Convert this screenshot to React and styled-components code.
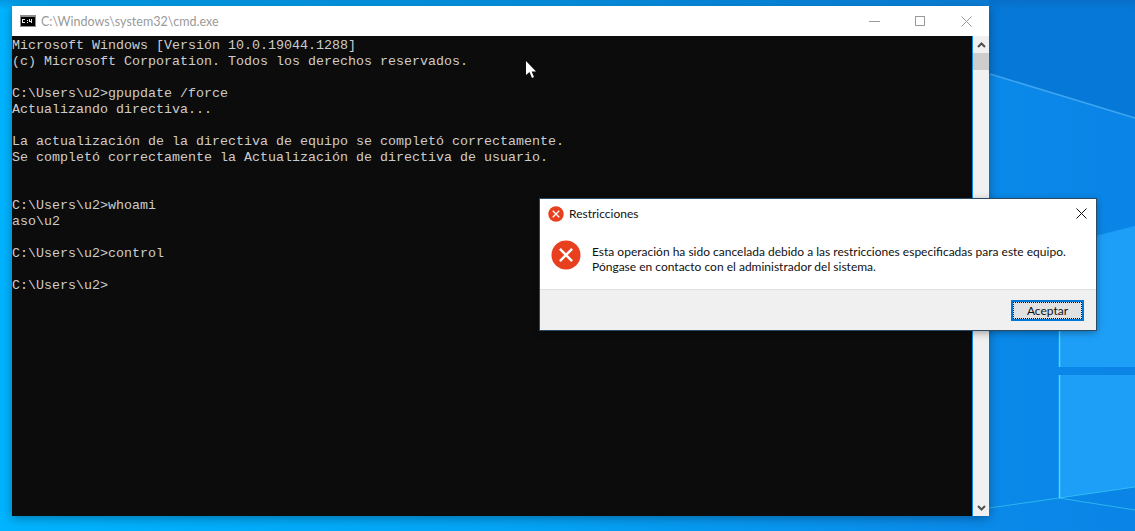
import React from "react";
import styled, { createGlobalStyle } from "styled-components";

const GlobalStyle = createGlobalStyle`
  html, body {
    margin: 0;
    padding: 0;
    height: 100%;
    overflow: hidden;
  }
  #root {
    height: 100%;
  }
`;

const uiFont = `"Lato", "Open Sans", "Liberation Sans", sans-serif`;

const Desktop = styled.div`
  position: relative;
  width: 1135px;
  height: 531px;
  overflow: hidden;
  background: linear-gradient(90deg, #00b4ff 0%, #04a4f6 45%, #0a8aea 86%, #0a84e6 100%);
`;

const Wallpaper = styled.svg`
  position: absolute;
  inset: 0;
`;

const ConsoleWindow = styled.section`
  position: absolute;
  left: 12px;
  top: 6px;
  width: 977px;
  height: 510px;
  display: flex;
  flex-direction: column;
  box-shadow: 0 2px 10px rgba(0, 0, 0, 0.35);
`;

const TitleBar = styled.header`
  height: 30px;
  flex: none;
  display: flex;
  align-items: center;
  background: #fff;
  padding-left: 8px;
`;

const TitleText = styled.span`
  margin-left: 5px;
  font: 12.5px ${uiFont};
  color: #9a9a9a;
`;

const WindowButtons = styled.div`
  margin-left: auto;
  display: flex;
  height: 100%;
`;

const WindowButton = styled.div`
  width: 46px;
  display: flex;
  align-items: center;
  justify-content: center;
`;

const ConsoleBody = styled.div`
  flex: 1;
  display: flex;
  min-height: 0;
`;

const Terminal = styled.pre`
  flex: 1;
  margin: 0;
  padding: 2px 0 0;
  background: #0c0c0c;
  color: #cccccc;
  font: 13.33px/16px "Liberation Mono", "DejaVu Sans Mono", monospace;
  overflow: hidden;
`;

const ScrollBar = styled.div`
  width: 16px;
  margin-left: 1px;
  flex: none;
  background: #f0f0f0;
  display: flex;
  flex-direction: column;
`;

const ScrollArrow = styled.div`
  height: 17px;
  flex: none;
  display: flex;
  align-items: center;
  justify-content: center;
`;

const ScrollThumb = styled.div`
  height: 17px;
  flex: none;
  background: #cdcdcd;
`;

const ScrollTrack = styled.div`
  flex: 1;
`;

const Dialog = styled.section`
  position: absolute;
  left: 540px;
  top: 199px;
  width: 556px;
  height: 131px;
  display: flex;
  flex-direction: column;
  background: #fff;
  box-shadow: 0 0 0 1px #2b4a66, 0 2px 8px rgba(0, 0, 0, 0.4);
  font: 12px ${uiFont};
  color: #111;
`;

const DialogTitle = styled.header`
  height: 29px;
  flex: none;
  display: flex;
  align-items: center;
  padding: 0 9px 0 8px;
  gap: 5px;
`;

const DialogClose = styled.div`
  margin-left: auto;
  display: flex;
`;

const DialogBody = styled.div`
  flex: 1;
  display: flex;
  align-items: flex-start;
  padding: 12px 0 0 11px;
  gap: 11px;
`;

const Message = styled.p`
  margin: 4px 0 0;
  line-height: 15px;
  white-space: nowrap;
`;

const DialogFooter = styled.footer`
  height: 41px;
  flex: none;
  box-sizing: border-box;
  display: flex;
  align-items: center;
  justify-content: flex-end;
  padding: 0 12px 0 0;
  background: #f0f0f0;
  border-top: 1px solid #dfdfdf;
`;

const AcceptButton = styled.button`
  width: 73px;
  height: 21px;
  padding: 0;
  box-sizing: border-box;
  border: 2px solid #0078d7;
  background: #e1e1e1;
  outline: 1px dotted #111;
  outline-offset: -3px;
  font: 12px ${uiFont};
  color: #111;
`;

const Cursor = styled.svg`
  position: absolute;
  left: 525px;
  top: 60px;
`;

const terminalText = `Microsoft Windows [Versión 10.0.19044.1288]
(c) Microsoft Corporation. Todos los derechos reservados.

C:\\Users\\u2>gpupdate /force
Actualizando directiva...

La actualización de la directiva de equipo se completó correctamente.
Se completó correctamente la Actualización de directiva de usuario.


C:\\Users\\u2>whoami
aso\\u2

C:\\Users\\u2>control

C:\\Users\\u2>`;

function ErrorIcon({ size }) {
  return (
    <svg width={size} height={size} viewBox="0 0 32 32">
      <circle cx="16" cy="16" r="15.5" fill="#e8401f" />
      <path d="M9.5 9.5 22.5 22.5M22.5 9.5 9.5 22.5" stroke="#fff" strokeWidth="2.6" fill="none" />
    </svg>
  );
}

function CmdIcon() {
  return (
    <svg width="16" height="12" viewBox="0 0 16 12">
      <rect width="16" height="12" fill="#8c8c8c" />
      <rect x="1" y="2" width="14" height="9" fill="#000" />
      <path d="M2 4h3v1H3v2h2v1H2zM7 5h1v1H7zM7 7h1v1H7zM9 4h1v2h1V4h1v4h-1V7H9z" fill="#e6e6e6" />
    </svg>
  );
}

function Chevron({ down }) {
  return (
    <svg width="9" height="6" viewBox="0 0 9 6">
      <path
        d={down ? "M1 1 4.5 4.5 8 1" : "M1 5 4.5 1.5 8 5"}
        stroke="#505050"
        strokeWidth="2"
        fill="none"
      />
    </svg>
  );
}

export default function App() {
  return (
    <>
      <GlobalStyle />
      <Desktop>
        <Wallpaper width="1135" height="531" viewBox="0 0 1135 531">
          <defs>
            <linearGradient id="topShade" x1="0" y1="0" x2="0" y2="1">
              <stop offset="0" stopColor="#0a5fa8" stopOpacity="0.35" />
              <stop offset="1" stopColor="#0a5fa8" stopOpacity="0" />
            </linearGradient>
          </defs>
          <path d="M989 0H1135V118L989 74Z" fill="#0678d8" />
          <rect x="0" y="0" width="1135" height="10" fill="url(#topShade)" />
          <path d="M1059 245 1135 226V367H1059Z" fill="#1d9ff8" />
          <path d="M1059 375H1135V487L1059 498Z" fill="#1d9ff8" />
          <path d="M990 74 1135 118" stroke="#3ea6f0" strokeWidth="1.5" fill="none" />
          <path d="M1059.5 330V367M1059.5 375V498" stroke="#45dcf5" strokeWidth="1.5" />
          <path d="M1059 498 1135 510M1059 498 1135 487M989 508 1059 498" stroke="#45dcf5" strokeOpacity="0.55" strokeWidth="1" fill="none" />
        </Wallpaper>

        <ConsoleWindow>
          <TitleBar>
            <CmdIcon />
            <TitleText>C:\Windows\system32\cmd.exe</TitleText>
            <WindowButtons>
              <WindowButton>
                <svg width="11" height="1"><rect width="11" height="1" fill="#9a9a9a" /></svg>
              </WindowButton>
              <WindowButton>
                <svg width="10" height="10"><rect x="0.5" y="0.5" width="9" height="9" fill="none" stroke="#9a9a9a" /></svg>
              </WindowButton>
              <WindowButton>
                <svg width="11" height="11"><path d="M0.5 0.5 10.5 10.5M10.5 0.5 0.5 10.5" stroke="#9a9a9a" fill="none" /></svg>
              </WindowButton>
            </WindowButtons>
          </TitleBar>
          <ConsoleBody>
            <Terminal>{terminalText}</Terminal>
            <ScrollBar>
              <ScrollArrow><Chevron /></ScrollArrow>
              <ScrollThumb />
              <ScrollTrack />
              <ScrollArrow><Chevron down /></ScrollArrow>
            </ScrollBar>
          </ConsoleBody>
        </ConsoleWindow>

        <Cursor width="12" height="19" viewBox="0 0 12 19">
          <path d="M1 1V15L4.5 12 7 18 9 17 6.6 11.5H11Z" fill="#fff" />
        </Cursor>

        <Dialog>
          <DialogTitle>
            <ErrorIcon size={16} />
            <span>Restricciones</span>
            <DialogClose>
              <svg width="11" height="11"><path d="M0.5 0.5 10.5 10.5M10.5 0.5 0.5 10.5" stroke="#111" fill="none" /></svg>
            </DialogClose>
          </DialogTitle>
          <DialogBody>
            <ErrorIcon size={30} />
            <Message>
              Esta operación ha sido cancelada debido a las restricciones especificadas para este equipo.
              <br />
              Póngase en contacto con el administrador del sistema.
            </Message>
          </DialogBody>
          <DialogFooter>
            <AcceptButton>Aceptar</AcceptButton>
          </DialogFooter>
        </Dialog>
      </Desktop>
    </>
  );
}
